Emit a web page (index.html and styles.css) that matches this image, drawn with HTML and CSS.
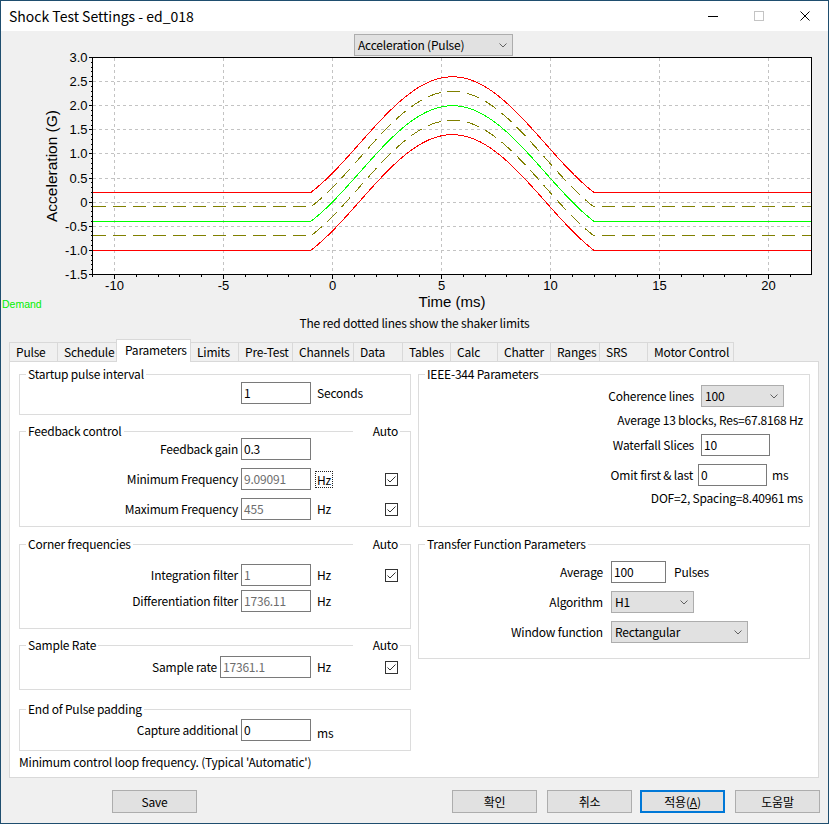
FILE: index.html
```html
<!DOCTYPE html>
<html>
<head>
<meta charset="utf-8">
<title>Shock Test Settings - ed_018</title>
<link rel="stylesheet" href="styles.css">
</head>
<body>
<div class="window">
  <div class="titlebar">
    <div class="title">Shock Test Settings - ed_018</div>
    <div class="capbtn"><svg width="10" height="10" viewBox="0 0 10 10"><path d="M0 5.5H10" stroke="#000" stroke-width="1"/></svg></div>
    <div class="capbtn"><svg width="10" height="10" viewBox="0 0 10 10"><rect x="0.5" y="0.5" width="9" height="9" fill="none" stroke="#c4c4c4"/></svg></div>
    <div class="capbtn"><svg width="10" height="10" viewBox="0 0 10 10"><path d="M0.5 0.5L9.5 9.5M9.5 0.5L0.5 9.5" stroke="#000" stroke-width="1" fill="none"/></svg></div>
  </div>

  <div class="chart">
    <svg class="plot" width="827" height="282" viewBox="1 31 827 282">
      <rect x="92.5" y="57.5" width="719" height="217" fill="#fff" stroke="none"/>
      <g class="grid" stroke="#c3c3c3" stroke-width="1" stroke-dasharray="3 3" shape-rendering="crispEdges">
        <path d="M93 81.61H811M93 105.72H811M93 129.83H811M93 153.94H811M93 178.06H811M93 202.17H811M93 226.28H811M93 250.39H811"/>
        <path d="M114.5 58V274M223.5 58V274M332.5 58V274M441.5 58V274M550.5 58V274M659.5 58V274M768.5 58V274"/>
      </g>
      <g fill="none" stroke-width="1" shape-rendering="crispEdges">
        <path id="c-red-hi" stroke="#ff0000"/>
        <path id="c-red-lo" stroke="#ff0000"/>
        <path id="c-ol-hi" stroke="#808000" stroke-dasharray="13 7"/>
        <path id="c-ol-lo" stroke="#808000" stroke-dasharray="13 7"/>
        <path id="c-green" stroke="#00ff00"/>
      </g>
      <rect x="92.5" y="57.5" width="719" height="217" fill="none" stroke="#000" shape-rendering="crispEdges"/>
      <g stroke="#000" shape-rendering="crispEdges">
        <line x1="91" y1="57" x2="91" y2="276" stroke-width="4" stroke-dasharray="1 23.111"/>
        <line x1="92" y1="57" x2="92" y2="276" stroke-width="2" stroke-dasharray="1 3.8222"/>
        <line x1="114" y1="277" x2="772" y2="277" stroke-width="4" stroke-dasharray="1 108"/>
        <line x1="92.2" y1="276" x2="812" y2="276" stroke-width="2" stroke-dasharray="1 20.8"/>
      </g>
      <g class="ticklbl" text-anchor="end">
        <text x="87.5" y="62">3.0</text>
        <text x="87.5" y="86.1">2.5</text>
        <text x="87.5" y="110.2">2.0</text>
        <text x="87.5" y="134.3">1.5</text>
        <text x="87.5" y="158.4">1.0</text>
        <text x="87.5" y="182.6">0.5</text>
        <text x="87.5" y="206.7">0</text>
        <text x="87.5" y="230.8">-0.5</text>
        <text x="87.5" y="254.9">-1.0</text>
        <text x="87.5" y="279">-1.5</text>
      </g>
      <g class="ticklbl" text-anchor="middle">
        <text x="114.5" y="289.5">-10</text>
        <text x="223.5" y="289.5">-5</text>
        <text x="332.5" y="289.5">0</text>
        <text x="441.5" y="289.5">5</text>
        <text x="550.5" y="289.5">10</text>
        <text x="659.5" y="289.5">15</text>
        <text x="768.5" y="289.5">20</text>
      </g>
      <text class="axtitle ytitle" transform="translate(57 166) rotate(-90)" text-anchor="middle">Acceleration (G)</text>
      <text class="axtitle" x="452" y="306.5" text-anchor="middle">Time (ms)</text>
      <text class="legend" x="2" y="308">Demand</text>
    </svg>
    <div class="combo chart-combo"><span class="ctext">Acceleration (Pulse)</span><svg class="chev" width="8" height="5" viewBox="0 0 8 5"><path d="M0.5 0.5L4 4L7.5 0.5" fill="none" stroke="#606060"/></svg></div>
  </div>

  <div class="caption">The red dotted lines show the shaker limits</div>

  <div class="tabstrip">
    <div class="tab w48">Pulse</div>
    <div class="tab w59">Schedule</div>
    <div class="tab sel w75">Parameters</div>
    <div class="tab w47">Limits</div>
    <div class="tab w54">Pre-Test</div>
    <div class="tab w61">Channels</div>
    <div class="tab w49">Data</div>
    <div class="tab w48">Tables</div>
    <div class="tab w47">Calc</div>
    <div class="tab w53">Chatter</div>
    <div class="tab w49">Ranges</div>
    <div class="tab w48">SRS</div>
    <div class="tab last w87">Motor Control</div>
  </div>

  <div class="tabbody">
    <div class="col">
      <div class="group g-startup">
        <div class="gt">Startup pulse interval</div>
        <div class="row">
          <div class="lbl"></div>
          <div class="tb">1</div>
          <div class="unit">Seconds</div>
          <div class="chkslot"></div>
        </div>
      </div>

      <div class="group g-feedback">
        <div class="gt">Feedback control</div>
        <div class="auto">Auto</div>
        <div class="row">
          <div class="lbl">Feedback gain</div>
          <div class="tb">0.3</div>
          <div class="unit"></div>
          <div class="chkslot"></div>
        </div>
        <div class="row gap8">
          <div class="lbl">Minimum Frequency</div>
          <div class="tb dis">9.09091</div>
          <div class="unit"><span class="focus">Hz</span></div>
          <svg class="chk" width="13" height="13" viewBox="0 0 13 13"><rect x="0.5" y="0.5" width="12" height="12" fill="#fff" stroke="#333"/><path d="M2.5 6.5L5 9L10.5 3.5" fill="none" stroke="#333"/></svg>
        </div>
        <div class="row gap8">
          <div class="lbl">Maximum Frequency</div>
          <div class="tb dis">455</div>
          <div class="unit">Hz</div>
          <svg class="chk" width="13" height="13" viewBox="0 0 13 13"><rect x="0.5" y="0.5" width="12" height="12" fill="#fff" stroke="#333"/><path d="M2.5 6.5L5 9L10.5 3.5" fill="none" stroke="#333"/></svg>
        </div>
      </div>

      <div class="group g-corner">
        <div class="gt">Corner frequencies</div>
        <div class="auto">Auto</div>
        <div class="row">
          <div class="lbl">Integration filter</div>
          <div class="tb dis">1</div>
          <div class="unit">Hz</div>
          <svg class="chk" width="13" height="13" viewBox="0 0 13 13"><rect x="0.5" y="0.5" width="12" height="12" fill="#fff" stroke="#333"/><path d="M2.5 6.5L5 9L10.5 3.5" fill="none" stroke="#333"/></svg>
        </div>
        <div class="row gap4">
          <div class="lbl">Differentiation filter</div>
          <div class="tb dis">1736.11</div>
          <div class="unit">Hz</div>
          <div class="chkslot"></div>
        </div>
      </div>

      <div class="group g-sample">
        <div class="gt">Sample Rate</div>
        <div class="auto">Auto</div>
        <div class="row">
          <div class="lbl">Sample rate</div>
          <div class="tb dis wide">17361.1</div>
          <div class="unit">Hz</div>
          <svg class="chk" width="13" height="13" viewBox="0 0 13 13"><rect x="0.5" y="0.5" width="12" height="12" fill="#fff" stroke="#333"/><path d="M2.5 6.5L5 9L10.5 3.5" fill="none" stroke="#333"/></svg>
        </div>
      </div>

      <div class="group g-end">
        <div class="gt">End of Pulse padding</div>
        <div class="row">
          <div class="lbl">Capture additional</div>
          <div class="tb">0</div>
          <div class="unit low">ms</div>
          <div class="chkslot"></div>
        </div>
      </div>

      <div class="note">Minimum control loop frequency. (Typical 'Automatic')</div>
    </div>

    <div class="col">
      <div class="group g-ieee">
        <div class="gt">IEEE-344 Parameters</div>
        <div class="rrow">
          <div class="rl">Coherence lines</div>
          <div class="combo cw83"><span class="ctext">100</span><svg class="chev" width="8" height="5" viewBox="0 0 8 5"><path d="M0.5 0.5L4 4L7.5 0.5" fill="none" stroke="#606060"/></svg></div>
        </div>
        <div class="rnote m5">Average 13 blocks, Res=67.8168 Hz</div>
        <div class="rrow m6">
          <div class="rl">Waterfall Slices</div>
          <div class="tb w69">10</div>
        </div>
        <div class="rrow m8">
          <div class="rl omit">Omit first &amp; last</div>
          <div class="tb w69">0</div>
          <div class="runit">ms</div>
        </div>
        <div class="rnote m4">DOF=2, Spacing=8.40961 ms</div>
      </div>

      <div class="group g-transfer">
        <div class="gt">Transfer Function Parameters</div>
        <div class="rrow">
          <div class="tl">Average</div>
          <div class="tb w55">100</div>
          <div class="runit m8l">Pulses</div>
        </div>
        <div class="rrow m8">
          <div class="tl">Algorithm</div>
          <div class="combo cw83"><span class="ctext">H1</span><svg class="chev" width="8" height="5" viewBox="0 0 8 5"><path d="M0.5 0.5L4 4L7.5 0.5" fill="none" stroke="#606060"/></svg></div>
        </div>
        <div class="rrow m8">
          <div class="tl">Window function</div>
          <div class="combo cw137"><span class="ctext">Rectangular</span><svg class="chev" width="8" height="5" viewBox="0 0 8 5"><path d="M0.5 0.5L4 4L7.5 0.5" fill="none" stroke="#606060"/></svg></div>
        </div>
      </div>
    </div>
  </div>

  <div class="footer">
    <div class="btn save">Save</div>
    <div class="btn">확인</div>
    <div class="btn">취소</div>
    <div class="btn focus">적용(<u>A</u>)</div>
    <div class="btn">도움말</div>
  </div>
</div>
<script src="script.js"></script>
</body>
</html>
```

FILE: styles.css
```css
* { box-sizing: border-box; }
html, body { margin: 0; padding: 0; background: #f0f0f0; }
body {
  font-family: "Noto Sans CJK KR", "Noto Sans", sans-serif;
  font-size: 12px;
  line-height: 16px;
  letter-spacing: -0.2px;
  color: #000;
}
.window {
  width: 829px;
  height: 824px;
  border: 1px solid #1f4e6f;
  background: #f0f0f0;
  display: flex;
  flex-direction: column;
  overflow: hidden;
}
.titlebar {
  flex: none;
  height: 30px;
  background: #fff;
  display: flex;
  align-items: center;
}
.title {
  flex: 1;
  padding-left: 8px;
  font-size: 14px;
  line-height: 30px;
  letter-spacing: 0;
  white-space: nowrap;
}
.capbtn {
  width: 46px;
  height: 30px;
  display: flex;
  align-items: center;
  justify-content: center;
}
.capbtn svg { display: block; }

.chart { flex: none; position: relative; height: 282px; }
.plot { display: block; letter-spacing: 0; }
.ticklbl text { font-family: "Liberation Sans", Arial, sans-serif; font-size: 13px; fill: #000; letter-spacing: 0; }
.axtitle { font-family: "Liberation Sans", Arial, sans-serif; font-size: 15px; fill: #000; letter-spacing: 0; }
.ytitle { font-size: 15.5px; }
.legend { font-family: "Liberation Sans", Arial, sans-serif; font-size: 10.5px; fill: #00ee00; letter-spacing: 0; }

.combo {
  display: flex;
  align-items: center;
  height: 22px;
  background: #e1e1e1;
  border: 1px solid #adadad;
  padding: 0 5px 0 3px;
  line-height: 20px;
}
.combo .ctext { flex: 1; white-space: nowrap; }
.chev { display: block; flex: none; }
.chart-combo { position: absolute; left: 353px; top: 3px; width: 159px; }
.cw83 { width: 83px; }
.cw137 { width: 137px; }

.caption { flex: none; margin-top: 1px; height: 18px; line-height: 18px; text-align: center; }

.tabstrip {
  flex: none;
  display: flex;
  align-items: flex-end;
  height: 22px;
  margin: 7px 0 0 8px;
}
.tab {
  height: 19px;
  line-height: 18px;
  border-top: 1px solid #d9d9d9;
  border-left: 1px solid #d9d9d9;
  background: #f0f0f0;
  padding-left: 6px;
  white-space: nowrap;
  overflow: hidden;
  flex: none;
}
.tab.last { border-right: 1px solid #d9d9d9; }
.tab.sel {
  height: 23px;
  margin-bottom: -1px;
  line-height: 20px;
  background: #fff;
  border-right: 1px solid #d9d9d9;
  padding-left: 8px;
  position: relative;
  z-index: 1;
}
.tab.sel + .tab { border-left: 0; }
.w47 { width: 47px; } .w48 { width: 48px; } .w49 { width: 49px; }
.w53 { width: 53px; } .w54 { width: 54px; } .w59 { width: 59px; }
.w61 { width: 61px; } .w75 { width: 75px; } .w87 { width: 87px; }

.tabbody {
  flex: none;
  width: 810px;
  height: 417px;
  margin-left: 8px;
  border: 1px solid #d9d9d9;
  background: #fff;
  display: flex;
  gap: 7px;
  padding: 12px 8px 0 9px;
}
.col { width: 392px; display: flex; flex-direction: column; }

.group { position: relative; border: 1px solid #dcdcdc; flex: none; }
.gt {
  position: absolute;
  top: -9px;
  left: 6px;
  padding: 0 2px;
  background: #fff;
  line-height: 16px;
  white-space: nowrap;
}
.auto {
  position: absolute;
  top: -9px;
  right: 10px;
  padding: 0 2px 0 20px;
  background: #fff;
  line-height: 16px;
}
.g-startup { height: 41px; padding-top: 7px; }
.g-feedback { margin-top: 16px; height: 96px; padding-top: 6px; }
.g-corner { margin-top: 17px; height: 85px; padding-top: 19px; }
.g-sample { margin-top: 16px; height: 45px; padding-top: 10px; }
.g-end { margin-top: 19px; height: 42px; padding-top: 9px; }
.note { margin-top: 3px; line-height: 16px; padding-left: 0; }

.row { display: flex; align-items: center; height: 22px; padding-right: 12px; }
.gap8 { margin-top: 8px; }
.gap4 { margin-top: 4px; }
.lbl { flex: 1; text-align: right; margin-right: 3px; white-space: nowrap; }
.tb {
  flex: none;
  width: 70px;
  height: 22px;
  border: 1px solid #7a7a7a;
  background: #fff;
  padding: 0 2px;
  line-height: 20px;
  white-space: nowrap;
  overflow: hidden;
}
.tb.dis { color: #6d6d6d; }
.tb.wide { width: 91px; }
.tb.w69 { width: 69px; }
.tb.w55 { width: 55px; }
.unit { flex: none; width: 74px; padding-left: 6px; white-space: nowrap; }
.unit.low { align-self: flex-end; }
.focus {
  display: inline-block;
  margin-left: -2px;
  padding: 0 1px;
  border: 1px dotted #222;
  line-height: 15px;
}
.chk, .chkslot { flex: none; width: 13px; height: 13px; display: block; }

.g-ieee { height: 153px; padding-top: 10px; }
.g-transfer { margin-top: 17px; height: 115px; padding-top: 16px; }
.rrow { display: flex; align-items: center; height: 22px; }
.rl { flex: none; width: 275px; text-align: right; margin-right: 7px; white-space: nowrap; }
.rl.omit { width: 274px; margin-right: 5px; }
.tl { flex: none; width: 184px; text-align: right; margin-right: 8px; white-space: nowrap; }
.runit { margin-left: 5px; white-space: nowrap; }
.runit.m8l { margin-left: 8px; }
.rnote { text-align: right; padding-right: 6px; line-height: 16px; white-space: nowrap; }
.m4 { margin-top: 4px; } .m5 { margin-top: 5px; } .m6 { margin-top: 6px; } .m8 { margin-top: 8px; }

.footer {
  flex: none;
  display: flex;
  gap: 10px;
  margin-top: 12px;
  padding: 0 8px 0 111px;
}
.btn {
  width: 85px;
  height: 23px;
  border: 1px solid #adadad;
  background: #e1e1e1;
  display: flex;
  align-items: center;
  justify-content: center;
  line-height: 16px;
}
.btn.save { margin-right: auto; }
.btn.focus { border: 2px solid #0078d7; }
.btn u { text-decoration: underline; }
```

FILE: script.js
```js
(function () {
  function X(t) { return 332.5 + 21.8 * t; }
  function Y(v) { return 57.5 + (3 - v) * 48.2222; }
  var W = 17;
  var c0 = Math.pow(Math.cos(Math.PI * 6.5 / W), 2);
  function g(t) {
    if (t <= -1 || t >= 12) return 0;
    var c = Math.cos(Math.PI * (t - 5.5) / W);
    return (c * c - c0) / (1 - c0);
  }
  function path(off) {
    var d = '';
    for (var i = -110; i <= 220; i++) {
      var t = i / 10;
      var v = -0.4 + 2.4 * g(t) + off;
      d += (i === -110 ? 'M' : 'L') + X(t).toFixed(2) + ' ' + Y(v).toFixed(2);
    }
    return d;
  }
  var map = { 'c-red-hi': 0.6, 'c-red-lo': -0.6, 'c-ol-hi': 0.3, 'c-ol-lo': -0.3, 'c-green': 0 };
  for (var id in map) {
    var el = document.getElementById(id);
    if (el) el.setAttribute('d', path(map[id]));
  }
})();
```
